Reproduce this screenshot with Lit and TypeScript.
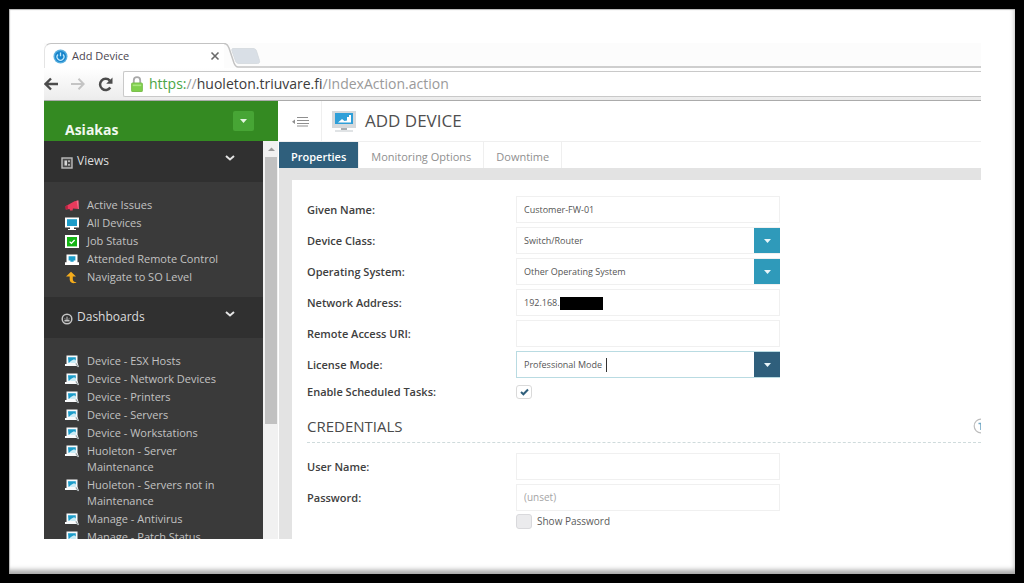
import { LitElement, html, css, svg, nothing } from "lit";
import { customElement, property, state } from "lit/decorators.js";
import { classMap } from "lit/directives/class-map.js";

const icons: Record<string, unknown> = {
  views: svg`<rect x="1" y="1" width="10" height="10" fill="#4a4a4a" stroke="#bdbdbd" stroke-width="1.4"/><path d="M3.500 3.500h2.500v5H3.500zM7 3.500h2v1.200H7zM7 7.300h2v1.200H7z" fill="#d5d5d5"/>`,
  gauge: svg`<circle cx="6" cy="6" r="4.8" fill="none" stroke="#c4c4c4" stroke-width="1.5"/><path d="M3.4 6.8h5.2v1.7H3.4z" fill="#c4c4c4"/><path d="M6 7V3.6M3.6 5.4l.8.5M8.4 5.4l-.8.5" stroke="#c4c4c4" stroke-width="1" fill="none"/>`,
  horn: svg`<path d="M.5 7.200 9.500 2.200 13.200 1.400 13.600 10 8 9.600 7.600 11.500H5L4.600 9.900.8 10.500z" fill="#e83a5c"/><path d="M.5 7.200 2.600 6.100 3 10.100.8 10.500z" fill="#b7213f"/><path d="M11.500 1.700 13.400 1.400 13.800 10 13 9.900z" fill="#f2708a"/>`,
  monitor: svg`<path d="M0 .5h14v10H9V12h2v1H3v-1h2v-1.500H0z" fill="#fff"/><path d="M2 2.200h10V9H2z" fill="#1c9cc9"/>`,
  job: svg`<path d="M0 0h14v13H0z" fill="#fff"/><path d="M2 2h10v9.4H2z" fill="#14b414"/><path d="m4.6 6.6 1.8 1.8 3.2-3.4" stroke="#fff" stroke-width="1.3" fill="none"/>`,
  remote: svg`<path d="M1.500 1.500h11v7.800H14V12H0V9.300h1.500z" fill="#fff"/><path d="M3.600 3.200h6.800v4.200H8.600v1.400H5.400V7.400H3.600z" fill="#1c9cc9"/>`,
  up: svg`<path d="M6 .8 11 5.600H7.800V8c0 2 1 3 3.700 3.300-1.500 1.600-6.800 1.400-6.800-2.800V5.600H1z" fill="#f4ac1c"/>`,
  dash: svg`<path d="M1.500.5h11v7L14 12.300l-2.600-1.300H0V9h1.500z" fill="#f8fafb"/><path d="M3 2.200h7.800v3.600H7.400L3.500 8z" fill="#1c9cc9"/><path d="m5.400 6.200 3.600-2 1.800 1v2.700H5.400z" fill="#c9ebf5"/><path d="m10.800 8.400 2.400 3.400" stroke="#9aa3a6" stroke-width="1.200"/>`,
};

const icon = (name: string, size = 14) =>
  html`<svg class="icon" width=${size} height=${size} viewBox="0 0 ${size} ${size}" aria-hidden="true">${icons[name]}</svg>`;

interface Entry { label: string; icon: string }
interface Section { title: string; icon: string; entries: Entry[] }

const sections: Section[] = [
  {
    title: "Views",
    icon: "views",
    entries: [
      { label: "Active Issues", icon: "horn" },
      { label: "All Devices", icon: "monitor" },
      { label: "Job Status", icon: "job" },
      { label: "Attended Remote Control", icon: "remote" },
      { label: "Navigate to SO Level", icon: "up" },
    ],
  },
  {
    title: "Dashboards",
    icon: "gauge",
    entries: [
      "Device - ESX Hosts",
      "Device - Network Devices",
      "Device - Printers",
      "Device - Servers",
      "Device - Workstations",
      "Huoleton - Server Maintenance",
      "Huoleton - Servers not in Maintenance",
      "Manage - Antivirus",
      "Manage - Patch Status",
    ].map((label) => ({ label, icon: "dash" })),
  },
];

@customElement("browser-chrome")
export class BrowserChrome extends LitElement {
  static styles = css`
    :host { display: block; font-family: "Open Sans", sans-serif; }
    button { border: 0; padding: 0; background: none; display: grid; place-items: center; }
    .strip { display: flex; height: 25px; background: #fcfcfc; }
    .tab { display: flex; align-items: center; width: 180px; padding: 0 4px 0 8px; box-sizing: border-box;
      border-top: 1px solid #c3c3c3; border-left: 1px solid #e4e4e4; border-top-left-radius: 7px; background: #fff; }
    .title { flex: 1; margin-left: 4px; font-size: 11px; line-height: 16px; color: #4b4650; }
    .edge { display: block; }
    .fill { flex: 1; border-bottom: 2px solid #cecece; }
    .bar { display: flex; align-items: center; height: 33px; box-sizing: border-box; border-bottom: 1px solid #ababab;
      background: linear-gradient(#fff, #ececec); }
    .nav { display: flex; gap: 13px; width: 79px; }
    .address { flex: 1; display: flex; align-items: center; gap: 6px; height: 26px; box-sizing: border-box; padding-left: 7px;
      border: 1px solid #c9c9c9; border-right: 0; background: #fff; border-radius: 2px 0 0 2px; }
    .url { font-size: 14px; line-height: 20px; color: #9a9a9a; white-space: nowrap; }
    .scheme { color: #4ba646; }
    .host { color: #3c3c3c; }
  `;

  render() {
    return html`
      <div class="strip">
        <div class="tab">
          <svg width="15" height="15" viewBox="0 0 15 15" aria-hidden="true">
            <circle cx="7.500" cy="7.500" r="7" fill="#58aede"/><circle cx="7.500" cy="7.500" r="5.600" fill="#1684cc"/>
            <path d="M5 5.500a3.400 3.400 0 1 0 5 0M7.500 3.500v3.800" stroke="#bfe8fb" stroke-width="1.300" fill="none"/>
          </svg>
          <span class="title">Add Device</span>
          <button aria-label="Close tab">
            <svg width="10" height="10" viewBox="0 0 10 10"><path d="m1.500 1.500 7 7m0-7-7 7" stroke="#6a6a6a" stroke-width="1.600"/></svg>
          </button>
        </div>
        <svg class="edge" width="46" height="25" viewBox="0 0 46 25" aria-hidden="true">
          <path d="M0 .5c3 0 4 2 5 4.500l5 15c1 2.500 2 4 4 4h32" fill="none" stroke="#c3c3c3" stroke-width="1.500"/>
          <path d="M9 5.500h20c2 0 3 1 3.500 2.500l3 9.500c.5 2-.5 3-2 3H15c-2 0-3-1-3.500-2.500L8 8c-.5-1.500 0-2.500 1-2.500z" fill="#d9dfe6" stroke="#d3d8dd" stroke-width=".8"/>
        </svg>
        <div class="fill"></div>
      </div>
      <div class="bar">
        <div class="nav">
          <button aria-label="Back">
            <svg width="14" height="14" viewBox="0 0 14 14"><path d="M14 7H2M7 1.500 1.500 7 7 12.500" fill="none" stroke="#4c4c4c" stroke-width="2.400"/></svg>
          </button>
          <button aria-label="Forward">
            <svg width="14" height="14" viewBox="0 0 14 14"><path d="M0 7h12M7.500 1.800 12.700 7l-5.200 5.200" fill="none" stroke="#c4c4c4" stroke-width="2"/></svg>
          </button>
          <button aria-label="Reload">
            <svg width="15" height="15" viewBox="0 0 15 15"><path d="M12.300 10.500A5.600 5.600 0 1 1 11.800 3.600" fill="none" stroke="#4c4c4c" stroke-width="2.500"/><path d="M14.500.5v6.300H8.200z" fill="#4c4c4c"/></svg>
          </button>
        </div>
        <div class="address">
          <svg width="12" height="16" viewBox="0 0 11 15" aria-hidden="true">
            <path d="M2.500 7V4a3 3 0 0 1 6 0v3" fill="none" stroke="#a9a9a9" stroke-width="1.700"/>
            <rect x=".5" y="6.500" width="10" height="8" rx="1" fill="#7fd04c" stroke="#7cc04f"/><path d="M1.500 8h8v1.500h-8z" fill="#a9e57f"/>
          </svg>
          <span class="url"><span class="scheme">https:</span>//<span class="host">huoleton.triuvare.fi</span>/IndexAction.action</span>
        </div>
      </div>
    `;
  }
}

@customElement("side-nav")
export class SideNav extends LitElement {
  static styles = css`
    :host { display: flex; flex-direction: column; min-height: 0; font-family: "Open Sans", sans-serif; }
    .brand { display: flex; flex: none; justify-content: space-between; align-items: flex-start; box-sizing: border-box;
      height: 40px; padding: 10px 24px 0 21px; background: #348a22; }
    .name { padding-top: 9px; font-size: 14px; line-height: 20px; font-weight: 700; color: #f1f8ef; }
    .menu { display: grid; place-items: center; width: 21px; height: 20px; padding: 0; border: 0; border-radius: 2px; background: #47a535; }
    .body { display: flex; flex: 1; min-height: 0; }
    .scroll { flex: 1; min-width: 0; overflow: hidden; background: #3a3a3a; }
    .head { display: flex; align-items: center; width: 100%; height: 41px; padding: 0 28px 2px 17px; border: 0; gap: 4px;
      background: #303030; color: #dedede; font: 12px/18px "Open Sans", sans-serif; text-align: left; }
    .text { flex: 1; }
    .chev { margin-bottom: 6px; }
    .head .icon { margin-top: 4px; }
    .list { list-style: none; margin: 0; padding: 14px 24px 11px 21px; }
    .link { display: flex; gap: 8px; padding: 1px 0; color: #c2c2c2; font-size: 11px; line-height: 16px; text-decoration: none; }
    .link .icon { flex: none; margin-top: 2px; }
    .track { width: 15px; box-sizing: border-box; padding: 0 1px 0 2px; background: #f1f1f1; }
    .arrow { display: block; margin: 0 auto; }
    .thumb { height: 67%; background: #c1c1c1; }
  `;

  render() {
    return html`
      <div class="brand">
        <span class="name">Asiakas</span>
        <button class="menu" aria-label="Customer menu">
          <svg width="7" height="4" viewBox="0 0 7 4"><path d="M0 0h7L3.500 4z" fill="#e5f5e2"/></svg>
        </button>
      </div>
      <div class="body">
        <nav class="scroll">
          ${sections.map(
            (s) => html`
              <button class="head">
                ${icon(s.icon, 12)}<span class="text">${s.title}</span>
                <svg class="chev" width="10" height="6" viewBox="0 0 10 6" aria-hidden="true"><path d="m1 1 4 3.500L9 1" fill="none" stroke="#e4e4e4" stroke-width="2"/></svg>
              </button>
              <ul class="list">
                ${s.entries.map((e) => html`<li><a class="link" href="#">${icon(e.icon)}<span>${e.label}</span></a></li>`)}
              </ul>
            `
          )}
        </nav>
        <div class="track">
          <svg class="arrow" width="11" height="16" viewBox="0 0 11 16" aria-hidden="true"><path d="M2 10h7L5.500 6.500z" fill="#9a9a9a"/></svg>
          <div class="thumb"></div>
        </div>
      </div>
    `;
  }
}

@customElement("form-field")
export class FormField extends LitElement {
  @property() label = "";
  @property() value = "";
  @property() kind = "text";
  @property() placeholder = "";
  @property({ type: Boolean }) current = false;
  @property({ type: Boolean }) masked = false;

  static styles = css`
    :host { display: grid; grid-template-columns: 209px minmax(0, 264px); align-items: center; font-family: "Open Sans", sans-serif; }
    .label { font-size: 11px; line-height: 16px; font-weight: 600; color: #404040; }
    .box { position: relative; display: flex; height: 27px; box-sizing: border-box; border: 1px solid #f0f0f0; background: #fff; }
    .box.current { border-color: #b9dbe2; }
    .control { flex: 1; min-width: 0; width: 100%; box-sizing: border-box; border: 0; outline: 0; padding: 0 7px; margin: 0; background: none;
      appearance: none; color: #555; font: 9px/16px "Open Sans", sans-serif; }
    .control::placeholder { color: #a5a5a5; font-size: 10px; opacity: 1; }
    .drop { position: absolute; right: -1px; top: 0; bottom: 0; width: 26px; display: grid; place-items: center; background: #2f9aba; pointer-events: none; }
    .current .drop { background: #2f5f7c; }
    .mask { position: absolute; left: 43px; top: 7px; width: 43px; height: 13px; background: #000; }
    .caret { position: absolute; left: 89px; top: 6px; width: 1px; height: 14px; background: #333; }
    .check { display: grid; grid-template-columns: 16px; align-items: center; height: 20px; }
    .tick { grid-area: 1 / 1; appearance: none; margin: 0; width: 16px; height: 14px; box-sizing: border-box; border: 1px solid #dadada; border-radius: 3px; background: #fff; }
    .mark { grid-area: 1 / 1; justify-self: center; pointer-events: none; }
  `;

  private control() {
    if (this.kind === "check")
      return html`<span class="check"><input id="c" class="tick" type="checkbox" checked />
        <svg class="mark" width="9" height="8" viewBox="0 0 9 8"><path d="m1 4 2.400 2.300L8 1.500" fill="none" stroke="#2f5f7c" stroke-width="2"/></svg></span>`;
    return html`<span class=${classMap({ box: true, current: this.current })}>
      ${this.kind === "select"
        ? html`<select id="c" class="control"><option>${this.value}</option></select>
            <span class="drop"><svg width="7" height="4" viewBox="0 0 7 4"><path d="M0 0h7L3.500 4z" fill="#e9f6fa"/></svg></span>`
        : html`<input id="c" class="control" type=${this.kind} .value=${this.value} placeholder=${this.placeholder} />`}
      ${this.masked ? html`<span class="mask"></span>` : nothing}
      ${this.current ? html`<span class="caret"></span>` : nothing}
    </span>`;
  }

  render() {
    return html`<label class="label" for="c">${this.label}</label>${this.control()}`;
  }
}

@customElement("device-page")
export class DevicePage extends LitElement {
  @state() private active = "Properties";

  static styles = css`
    :host { display: flex; flex-direction: column; min-width: 0; min-height: 0; overflow: hidden; background: #fff; font-family: "Open Sans", sans-serif; }
    .top { display: flex; flex: none; align-items: stretch; height: 41px; box-sizing: border-box; border-bottom: 1px solid #efefef; }
    .toggle { width: 43px; padding: 0; border: 0; border-right: 1px solid #efefef; background: none; display: grid; place-items: center; }
    .title { display: flex; align-items: center; gap: 9px; margin: 0; padding-left: 10px; font-size: 17px; line-height: 24px; font-weight: 400; color: #4f4f4f; }
    .tabs { display: flex; flex: none; height: 26px; }
    .tab { padding: 4px 12px 0; border: 0; border-right: 1px solid #efefef; background: #fff; color: #8f8f8f; font: 11px/16px "Open Sans", sans-serif; }
    .tab.on { background: #2f5f7c; color: #fff; font-weight: 600; }
    .area { flex: 1; min-height: 0; padding: 12px 0 0 13px; background: #e3e3e3; }
    .panel { height: 100%; box-sizing: border-box; padding: 16px 0 0 15px; background: #fff; }
    .group { display: grid; gap: 4px; }
    .section { display: flex; align-items: center; justify-content: space-between; margin-top: 11px; margin-bottom: 10px; padding-bottom: 3px; height: 26px; border-bottom: 1px dashed #cfdbdc; }
    .heading { margin: 0; font-size: 15px; line-height: 20px; font-weight: 400; color: #4a4a4a; }
    .help { width: 8px; height: 16px; padding: 0; border: 0; background: none; overflow: hidden; }
    .show { display: flex; align-items: center; gap: 5px; margin: 2px 0 0 209px; font-size: 10px; line-height: 16px; color: #5b5b5b; }
    .tick { appearance: none; margin: 0; width: 16px; height: 15px; box-sizing: border-box; border: 1px solid #d9d9dc; border-radius: 3px; background: #ebebed; }
  `;

  render() {
    return html`
      <header class="top">
        <button class="toggle" aria-label="Toggle menu">
          <svg width="17" height="11" viewBox="0 0 17 11"><path d="M5 1.500h11M5 4.500h12M5 7.500h12M5 10h11" stroke="#8f8f8f" stroke-width="1.100"/><path d="M0 5.700 3 3.500v4.400z" fill="#8f8f8f"/></svg>
        </button>
        <h1 class="title">
          <svg width="24" height="23" viewBox="0 0 24 23" aria-hidden="true">
            <path d="M0 1h24v17H0z" fill="#d5d9dc"/><path d="M3 3h18v11H3z" fill="#2f9fd8"/>
            <path d="M6 12.500 10 9l2.500 2 2.500-.500V7h2V5h2v7.500z" fill="#fff"/>
            <path d="M9 18h6v2H9z" fill="#a9aeb2"/><path d="M3 20h18v2H3z" fill="#e0e3e5"/>
          </svg>
          ADD DEVICE
        </h1>
      </header>
      <div class="tabs" role="tablist">
        ${["Properties", "Monitoring Options", "Downtime"].map(
          (t) => html`<button role="tab" class=${classMap({ tab: true, on: t === this.active })} @click=${() => (this.active = t)}>${t}</button>`
        )}
      </div>
      <div class="area">
        <div class="panel">
          <div class="group">
            <form-field label="Given Name:" value="Customer-FW-01"></form-field>
            <form-field label="Device Class:" kind="select" value="Switch/Router"></form-field>
            <form-field label="Operating System:" kind="select" value="Other Operating System"></form-field>
            <form-field label="Network Address:" value="192.168." masked></form-field>
            <form-field label="Remote Access URI:"></form-field>
            <form-field label="License Mode:" kind="select" value="Professional Mode" current></form-field>
            <form-field label="Enable Scheduled Tasks:" kind="check"></form-field>
          </div>
          <div class="section">
            <h2 class="heading">CREDENTIALS</h2>
            <button class="help" aria-label="Help">
              <svg width="16" height="16" viewBox="0 0 16 16"><circle cx="8" cy="8" r="6.800" fill="none" stroke="#bdbdbd" stroke-width="1.200"/><path d="M5.500 5.500h5M8 5.500V12" stroke="#6fa6c4" stroke-width="1.600"/></svg>
            </button>
          </div>
          <div class="group">
            <form-field label="User Name:"></form-field>
            <form-field label="Password:" kind="password" placeholder="(unset)"></form-field>
          </div>
          <label class="show"><input class="tick" type="checkbox" />Show Password</label>
        </div>
      </div>
    `;
  }
}

@customElement("app-root")
export class AppRoot extends LitElement {
  static styles = css`
    :host { display: block; box-sizing: border-box; height: 100vh; padding: 9px; background: #000; }
    .sheet { display: flex; height: 100%; box-sizing: border-box; padding: 34px 34px 35px 35px; background: #fff;
      box-shadow: inset -2px -6px 5px -2px #a8a8a8, inset 1px 1px 1px #b5b5b5; }
    .window { flex: 1; min-width: 0; display: flex; flex-direction: column; }
    .app { flex: 1; min-height: 0; display: grid; grid-template-columns: 234px minmax(0, 1fr); grid-template-rows: minmax(0, 1fr); gap: 1px; }
  `;

  render() {
    return html`
      <main class="sheet">
        <div class="window">
          <browser-chrome></browser-chrome>
          <div class="app"><side-nav></side-nav><device-page></device-page></div>
        </div>
      </main>
    `;
  }
}
